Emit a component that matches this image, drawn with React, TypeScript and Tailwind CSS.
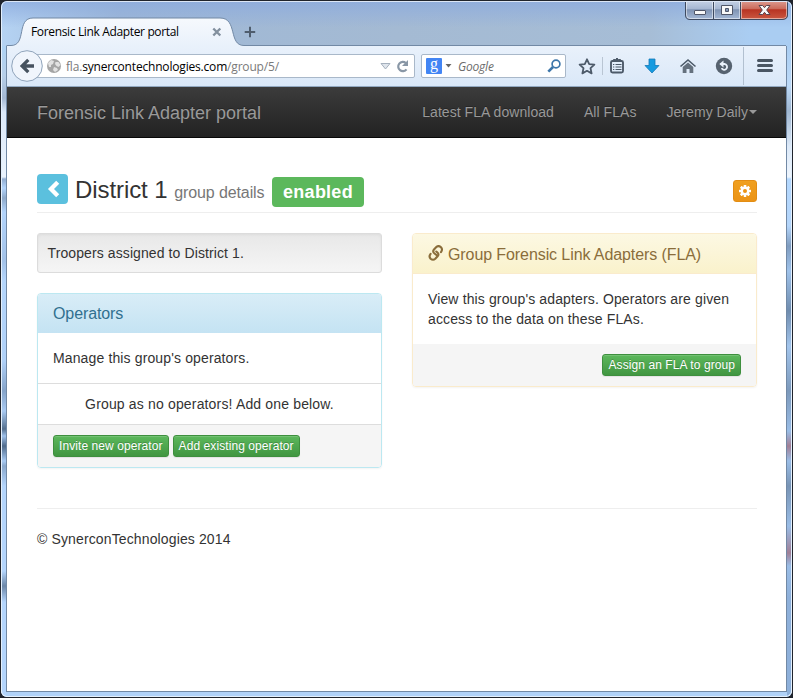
import React from "react";

const ui = "font-['Open_Sans','Noto_Sans',sans-serif]";

function WindowButtons() {
  return (
    <svg className="absolute top-0 right-[4px]" width="105" height="21" viewBox="0 0 105 21">
      <defs>
        <linearGradient id="wb" x1="0" y1="0" x2="0" y2="1">
          <stop offset="0" stopColor="#c8d4e8" /><stop offset=".45" stopColor="#a6b7d2" />
          <stop offset=".5" stopColor="#7f93b3" /><stop offset="1" stopColor="#a5b9d6" />
        </linearGradient>
        <linearGradient id="wr" x1="0" y1="0" x2="0" y2="1">
          <stop offset="0" stopColor="#dfa197" /><stop offset=".45" stopColor="#cb6b5b" />
          <stop offset=".5" stopColor="#b83423" /><stop offset="1" stopColor="#cb5942" />
        </linearGradient>
      </defs>
      <path d="M1.500 0V15Q1.500 19.500 6 19.500H98Q103.500 19.500 103.500 15V0" fill="url(#wb)" />
      <path d="M57 0V19.500H98Q103.500 19.500 103.500 15V0Z" fill="url(#wr)" />
      <path d="M2.500 1V15Q2.500 18.500 6 18.500H28.500V1.500H2.500M30.500 1.500V18.500H55.500V1.500H30.500M57.500 1.500V18.500H98Q102.500 18.500 102.500 15V1.500H57.500" fill="none" stroke="#fff" strokeOpacity=".5" />
      <path d="M1.500 0V15Q1.500 19.500 6 19.500H98Q103.500 19.500 103.500 15V0M29.500 1V19M56.500 1V19" fill="none" stroke="#3e4a60" />
      <rect x="10.500" y="10.500" width="11" height="4" rx=".5" fill="#f8f8f8" stroke="#505668" />
      <path d="M37.500 5.500h11v9h-11z M41.500 8.500v3h3v-3z" fill="#f8f8f8" stroke="#505668" fillRule="evenodd" />
      <path d="M75 5.500h3.700l1.800 2.200 1.800-2.200h3.700l-3.300 4.500 3.300 4.500h-3.700l-1.800-2.200-1.800 2.200h-3.700l3.300-4.500z" fill="#f8f8f8" stroke="#5a4650" />
    </svg>
  );
}

function TitleBar() {
  return (
    <header className="relative h-[46px] shrink-0">
      <svg className="absolute inset-0" width="793" height="46" viewBox="0 0 793 46">
        <defs>
          <linearGradient id="tab" x1="0" y1="0" x2="0" y2="1">
            <stop offset="0" stopColor="#f6f9fd" /><stop offset="1" stopColor="#e9f1fb" />
          </linearGradient>
        </defs>
        <path d="M7 46V45.500H11C27 45.500 16 18 33 18H220C238 18 228 45.500 244 45.500H786V46Z" fill="url(#tab)" />
        <path d="M6.500 45.500H11C27 45.500 16 18 33 18H220C238 18 228 45.500 244 45.500H786" fill="none" stroke="#7289a5" />
        <path d="M213.300 28.500l7 7m0-7l-7 7" stroke="#83909e" strokeWidth="2.400" />
        <path d="M244.700 32h10.500M250 26.800v10.500" stroke="#4f5d6d" strokeWidth="2" />
      </svg>
      <div className={`relative flex h-full items-start pt-[23px] pl-[31px] text-[12px] leading-[18px] tracking-[-0.35px] text-black ${ui}`}>
        <span className="whitespace-nowrap">Forensic Link Adapter portal</span>
      </div>
      <WindowButtons />
    </header>
  );
}

function ToolbarIcons() {
  return (
    <svg width="220" height="41" viewBox="566 46 220 41" className="shrink-0">
      <path d="M587 59.300l2.200 4.800 5.200.600-3.900 3.500 1.100 5.200-4.600-2.600-4.600 2.600 1.100-5.200-3.900-3.500 5.200-.600z" fill="none" stroke="#4d5a69" strokeWidth="1.800" strokeLinejoin="round" />
      <path d="M602.500 57v18" stroke="#b9c5d3" />
      <rect x="611" y="61" width="12" height="11.500" rx="1.500" fill="none" stroke="#4d5a69" strokeWidth="1.900" />
      <path d="M613.500 61v-1.500h2l1.500-1.500 1.500 1.500h2V61" fill="#4d5a69" stroke="#4d5a69" />
      <path d="M613 64.500h1.300M615.500 64.500h6M613 67h1.300M615.500 67h6M613 69.500h1.300M615.500 69.500h6" stroke="#4d5a69" strokeWidth="1" />
      <path d="M649 59h6v6.500h4l-7 7.500-7-7.500h4z" fill="#179be0" stroke="#1479b8" strokeWidth=".8" strokeLinejoin="round" />
      <path d="M680.500 66.500l7.500-6.500 7.500 6.500" fill="none" stroke="#4d5a69" strokeWidth="1.600" />
      <path d="M682.700 67l5.300-4.600 5.300 4.600V73h-3.800v-4h-3v4h-3.800z" fill="#65717e" />
      <circle cx="724" cy="66" r="8.200" fill="#56626f" />
      <path d="M720.500 64h4a2.900 2.900 0 1 1-2.900 4.200" fill="none" stroke="#eaf2fb" strokeWidth="1.800" />
      <path d="M723.500 60.500v7l-4.200-3.500z" fill="#eaf2fb" />
      <path d="M743.500 47v38" stroke="#b2c0d0" />
      <path d="M758.500 60.500h13M758.500 65.500h13M758.500 70.500h13" stroke="#4a5663" strokeWidth="3" strokeLinecap="round" />
    </svg>
  );
}

function Toolbar() {
  return (
    <div className={`relative flex h-[41px] items-center border-b border-[#93a9c1] bg-linear-to-b from-[#e9f1fb] to-[#dae8f8] ${ui}`}>
      <div className="ml-[27px] flex h-[24px] w-[381px] items-center rounded-[2px] border border-[#a9b8c9] bg-white pl-[12px] text-[12px]">
        <svg width="14" height="14" viewBox="0 0 14 14" className="shrink-0">
          <circle cx="7" cy="7" r="7" fill="#a5a5a5" />
          <path d="M1 4l3-3 3 1-1 3-2 1v2L2 8zM8.500 3l3 0 2 3-2 2-2-1-1.500-2zM7 8l3 1 1 2-3 2-2-2z" fill="#e2e2e2" />
        </svg>
        <span className="mt-[2px] ml-[5px] tracking-[-0.18px] whitespace-nowrap text-[#7a7a7a]">fla.<span className="text-black">synercontechnologies.com</span>/group/5/</span>
        <svg width="34" height="16" viewBox="0 0 34 16" className="mr-[3px] ml-auto shrink-0">
          <path d="M4 5.500h9l-4.500 5.500z" fill="#dfe5ec" stroke="#a5b0bd" />
          <path d="M28.800 5A4.600 4.600 0 1 0 29.500 11.300" fill="none" stroke="#8997a6" strokeWidth="2.200" />
          <path d="M31 2v6h-6z" fill="#8997a6" />
        </svg>
      </div>
      <div className="ml-[6px] flex h-[24px] w-[145px] items-center rounded-[2px] border border-[#a9b8c9] bg-white pl-[4px]">
        <span className="flex size-[16px] items-center justify-center rounded-[1px] bg-[#4285f4] font-['Liberation_Serif',serif] text-[16px] leading-none text-white"><span className="-mt-[4px]">g</span></span>
        <svg width="7" height="4" viewBox="0 0 7 4" className="ml-[3px]"><path d="M.5 0h6l-3 3.500z" fill="#666" /></svg>
        <span className="mt-[2px] ml-[6px] text-[12px] tracking-[-0.2px] text-[#6c6c6c] italic">Google</span>
        <svg width="14" height="14" viewBox="0 0 14 14" className="mr-[4px] ml-auto"><circle cx="9" cy="5" r="3.900" fill="none" stroke="#3d76aa" strokeWidth="1.700" /><path d="M6 8L1.300 12.700" stroke="#3d76aa" strokeWidth="2.600" /></svg>
      </div>
      <ToolbarIcons />
      <svg className="absolute top-[4px] left-[3px]" width="34" height="34" viewBox="0 0 34 34">
        <circle cx="17" cy="16" r="15.300" fill="#f0f5fc" stroke="#8fa3ba" />
        <path d="M24 16H13M18.300 9.800L12.100 16l6.200 6.200" fill="none" stroke="#46525f" strokeWidth="3.300" />
      </svg>
    </div>
  );
}

function SuccessButton({ children }: { children: React.ReactNode }) {
  return (
    <button className="h-[22px] rounded-[3px] border border-[#3e8f3e] bg-linear-to-b from-[#5cb85c] to-[#419641] px-[5px] text-[12px] leading-[19px] tracking-[0.08px] whitespace-nowrap text-white shadow-[inset_0_1px_0_rgba(255,255,255,.15),0_1px_1px_rgba(0,0,0,.075)] [text-shadow:0_-1px_0_rgba(0,0,0,.2)]">
      {children}
    </button>
  );
}

function LinkGlyph() {
  return (
    <svg width="16" height="18" viewBox="0 0 16 18" className="mr-[4px] -mt-px shrink-0" fill="none" stroke="#8a6d3b" strokeWidth="2.100" strokeLinecap="round">
      <path d="M13 8.200Q15 5.500 13 3.200Q10.500 1 8.300 3L6 5.500Q4.300 7.500 6.300 9.300L9 11.500" />
      <path d="M2.600 9.800Q.5 12.500 2.600 14.700Q5 16.800 7.300 14.800L9.600 12.300Q11.300 10.300 9.400 8.500L8.300 7.500" />
    </svg>
  );
}

function GearGlyph() {
  return (
    <svg width="12" height="12" viewBox="-6 -6 12 12">
      <g fill="#fff">
        {[0, 45, 90, 135].map((a) => <rect key={a} x="-1.300" y="-6" width="2.600" height="12" rx=".4" transform={`rotate(${a})`} />)}
        <circle r="4.400" />
      </g>
      <circle r="2" fill="#eb9316" />
    </svg>
  );
}

function Page() {
  return (
    <div className="flex-1 bg-white font-['Liberation_Sans',Arial,sans-serif] text-[14px] leading-[20px] tracking-[0.13px] text-[#333]">
      <nav className="flex h-[51px] items-center border-b border-[#080808] bg-linear-to-b from-[#3c3c3c] to-[#222] pr-[29px] pl-[30px] tracking-[0.05px] text-[#999] [text-shadow:0_-1px_0_rgba(0,0,0,.25)]">
        <span className="mt-[2px] text-[18px] tracking-normal">Forensic Link Adapter portal</span>
        <div className="ml-auto flex gap-[30px]">
          <span>Latest FLA download</span>
          <span>All FLAs</span>
          <span className="flex items-center">Jeremy Daily<i className="ml-[1px] border-x-4 border-t-4 border-x-transparent border-t-[#999]" /></span>
        </div>
      </nav>
      <main className="pr-[29px] pl-[30px]">
        <div className="flex h-[75px] items-start border-b border-[#eee] pt-[36px]">
          <span className="flex h-[30px] w-[31px] items-center justify-center rounded-[4px] bg-[#5bc0de]">
            <svg width="16" height="18" viewBox="0 0 16 18"><path d="M12.700 2.300L6 9l6.700 6.700" fill="none" stroke="#fff" strokeWidth="4.300" /></svg>
          </span>
          <h1 className="ml-[7px] w-[190px] text-[24px] leading-[32px] tracking-[-0.08px] whitespace-nowrap">District 1 <small className="text-[16px] tracking-[-0.1px] text-[#777]">group details</small></h1>
          <span className="mt-[3px] ml-[7px] flex h-[30px] w-[92px] items-center justify-center rounded-[4px] bg-[#5cb85c] text-[18px] font-bold tracking-[0.25px] text-white">enabled</span>
          <span className="mt-[6px] ml-auto flex h-[22px] w-[24px] items-center justify-center rounded-[3px] border border-[#e38d13] bg-linear-to-b from-[#f0a01f] to-[#eb9316]"><GearGlyph /></span>
        </div>
        <div className="mt-[20px] flex items-start gap-[30px]">
          <section className="w-[345px]">
            <div className="h-[40px] rounded-[3px] border border-[#dcdcdc] bg-linear-to-b from-[#e8e8e8] to-[#f5f5f5] px-[9.5px] py-[9px] tracking-[0.1px] shadow-[inset_0_1px_3px_rgba(0,0,0,.05),0_1px_0_rgba(255,255,255,.1)]">Troopers assigned to District 1.</div>
            <div className="mt-[20px] overflow-hidden rounded-[4px] border border-[#bce8f1] shadow-[0_1px_2px_rgba(0,0,0,.05)]">
              <h3 className="h-[39px] bg-linear-to-b from-[#d9edf7] to-[#c4e3f3] px-[15px] pt-[10px] text-[16px] leading-[19px] tracking-[-0.1px] text-[#31708f]">Operators</h3>
              <p className="h-[50px] px-[15px] py-[15px]">Manage this group's operators.</p>
              <p className="h-[41px] border-t border-[#ddd] pt-[10px] text-center tracking-[0.16px]">Group as no operators! Add one below.</p>
              <div className="flex h-[43px] gap-[4px] border-t border-[#ddd] bg-[#f5f5f5] px-[15px] pt-[10px]">
                <SuccessButton>Invite new operator</SuccessButton>
                <SuccessButton>Add existing operator</SuccessButton>
              </div>
            </div>
          </section>
          <section className="w-[345px] overflow-hidden rounded-[4px] border border-[#faebcc] shadow-[0_1px_2px_rgba(0,0,0,.05)]">
            <h3 className="flex h-[40px] items-center border-b border-[#faebcc] bg-linear-to-b from-[#fcf8e3] to-[#faf2cc] px-[15px] text-[16px] tracking-[-0.09px] whitespace-nowrap text-[#8a6d3b]"><LinkGlyph /><span className="mt-[2px]">Group Forensic Link Adapters (FLA)</span></h3>
            <p className="h-[70px] px-[15px] py-[15px]">View this group's adapters. Operators are given access to the data on these FLAs.</p>
            <div className="flex h-[42px] justify-end bg-[#f5f5f5] px-[15px] pt-[10px]"><SuccessButton>Assign an FLA to group</SuccessButton></div>
          </section>
        </div>
        <footer className="mt-[40px] border-t border-[#eee] pt-[20px]">© SynerconTechnologies 2014</footer>
      </main>
    </div>
  );
}

function SideGlass({ side }: { side: "left" | "right" }) {
  return side === "left" ? (
    <div className="w-[4px] bg-[linear-gradient(#aed3f5_0px,#b7cfe9_30px,#a4b8d2_52px,#dce9f9_66px,#eaf3fd_131px,#92add0_133px,#b4d5fc_142px,#8ea9c9_152px,#b4d5fc_166px,#a3c2e8_215px,#b5d6fc_235px,#b0d1f8_315px,#86a4c9_345px,#a9caf2_365px,#55708f_383px,#a0c2ec_390px,#4f6a8b_400px,#a9cbf3_415px,#8aa8cc_420px,#b4d5fc_440px,#b4d5fc_525px,#6c87a8_540px,#b4d5fc_556px)]" />
  ) : (
    <div className="w-[4px] bg-[linear-gradient(#a9cdf2_0px,#bcd9f7_40px,#9fb6d0_65px,#dce9f8_100px,#eef5fd_131px,#b4d8fe_133px,#b4d5fa_180px,#7f9cbf_200px,#9fc2ea_225px,#6f8cae_265px,#a3c5ec_300px,#7c99bb_345px,#9abde6_385px,#a27f95_400px,#9abde6_415px,#7894b5_440px,#9abde6_480px,#a07f96_507px,#9abde6_520px,#8eb0da_552px)]" />
  );
}

export default function App() {
  return (
    <div className="h-[698px] w-[793px] bg-[#20242c]">
      <div className="relative flex h-[698px] flex-col overflow-hidden rounded-[7px] border border-[#20242c] bg-[#b3d2f7]">
        <div className="-m-px flex h-[698px] w-[793px] shrink-0 flex-col bg-[linear-gradient(90deg,#b5d3f3_0px,#9fb8d6_120px,#a4bad3_400px,#a6bdd6_650px,#aacdf2_750px)]">
          <div className="-mb-[46px] h-[46px] shrink-0 bg-linear-to-b from-[#8baade]/80 to-transparent to-60%" />
          <TitleBar />
          <div className="flex flex-1">
            <div className="w-[2px] bg-linear-to-r from-[#20242c] from-50% to-[#e4f0fd] to-50%" />
            <SideGlass side="left" />
            <div className="flex flex-1 flex-col">
              <div className="flex flex-1 flex-col border-x border-b border-[#7289a5]">
                <Toolbar />
                <Page />
              </div>
              <div className="h-[6px] bg-[linear-gradient(#b1d2f8_4px,#e4f0fd_4px)]" />
            </div>
            <SideGlass side="right" />
            <div className="w-[2px] bg-linear-to-r from-[#e4f0fd] from-50% to-[#20242c] to-50%" />
          </div>
        </div>
        <div className="pointer-events-none absolute inset-0 rounded-[6px] border border-b-[#e4f0fd] border-t-[#dce6f5] border-x-[#e4f0fd]" />
      </div>
    </div>
  );
}
